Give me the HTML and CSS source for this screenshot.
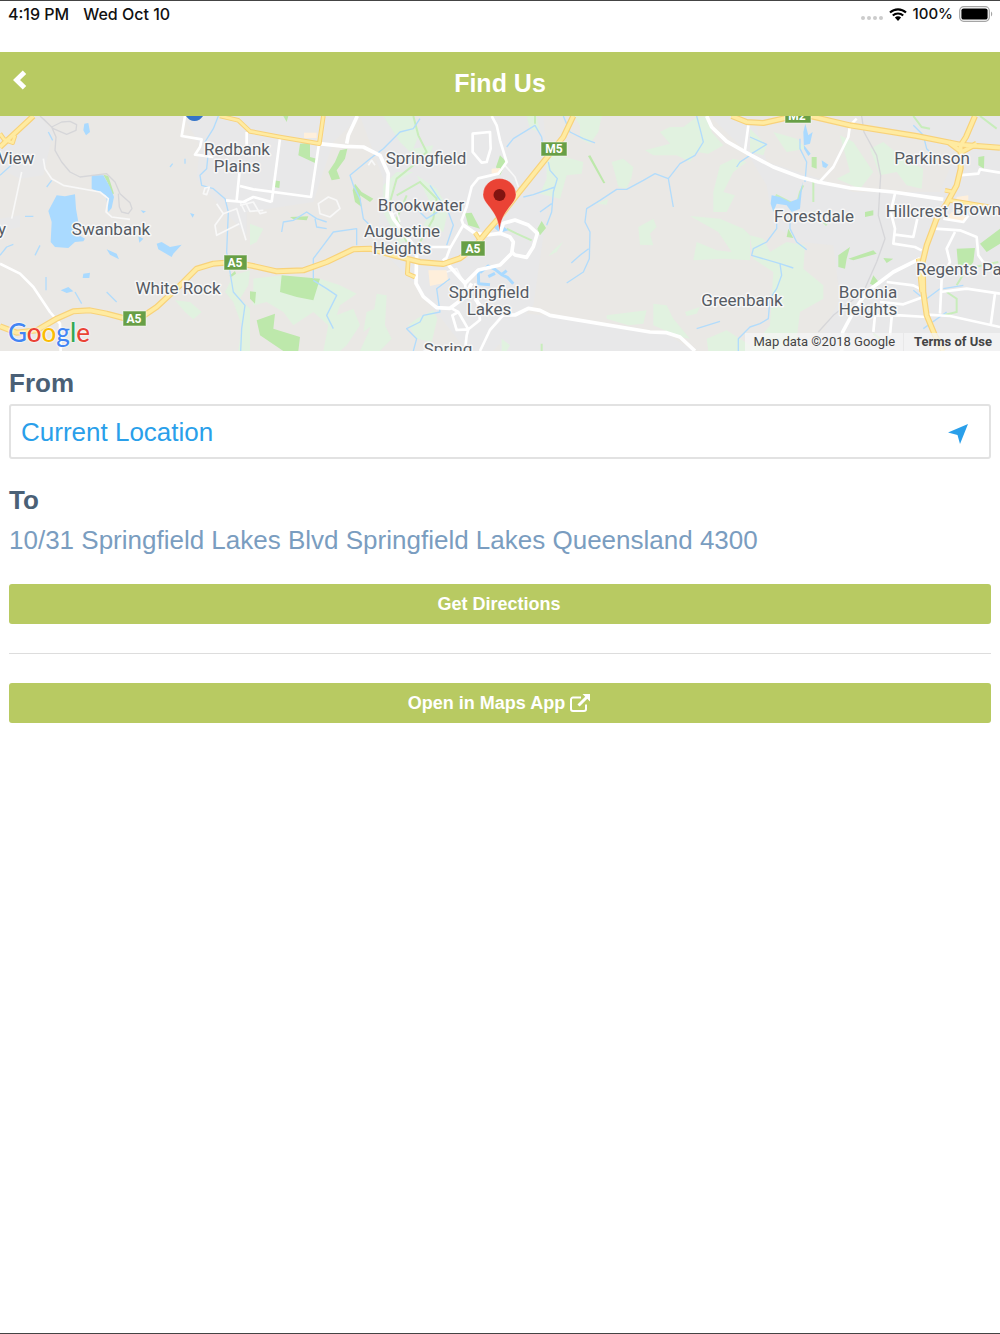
FILE: index.html
```html
<!DOCTYPE html>
<html lang="en">
<head>
    <meta charset="UTF-8">
    <meta name="viewport" content="width=device-width, initial-scale=1.0">
    <title>Find Us</title>
    <link rel="stylesheet" href="styles.css">
</head>
<body>
    <div class="status-bar">
        <div class="status-left">
            <span>4:19 PM</span>
            <span>Wed Oct 10</span>
        </div>
        <div class="status-right">
            <span class="signal"><i></i><i></i><i></i><i></i></span>
            <svg class="wifi" width="18" height="13" viewBox="0 0 18 13">
                <path d="M1 4.6a11.5 11.5 0 0 1 16 0M3.8 7.6a7.5 7.5 0 0 1 10.4 0" fill="none" stroke="#000" stroke-width="2.1"/>
                <path d="M5.9 9.6a4.4 4.4 0 0 1 6.2 0L9 12.9z"/>
            </svg>
            <span class="percent">100%</span>
            <svg width="34" height="16" viewBox="0 0 34 16">
                <rect x="0.7" y="0.7" width="29.6" height="14.6" rx="4" fill="none" stroke="#a5a5a5" stroke-width="1.2"/>
                <rect x="2.4" y="2.4" width="26.2" height="11.2" rx="2.2"/>
                <path d="M32 5.5c1.6.8 1.6 4.200 0 5z" fill="#a5a5a5"/>
            </svg>
        </div>
    </div>

    <header class="header">
        <button class="back" id="back" aria-label="Back">
            <svg width="14" height="20" viewBox="0 0 14 20">
                <path d="M11.500 2.300L3.500 10l8 7.700" fill="none" stroke="#fff" stroke-width="5"/>
            </svg>
        </button>
        <h1>Find Us</h1>
    </header>

    <div class="map" id="map">
        <svg class="map-canvas" viewBox="0 0 1000 235" preserveAspectRatio="xMidYMid slice">
            <g transform="translate(0 -4) scale(.33333)">
                <!-- built up areas -->
                <g class="urban">
                    <path d="M0 12H120L160 60 130 190 60 200 0 170zM0 320L60 310 60 345 0 360z"/>
                    <path d="M550 12H1080L1000 90 940 270 740 300 740 370 640 260 590 200 600 100z"/>
                    <path d="M1080 12H1500L1660 180 1620 440 1600 580 1480 717H1400L1240 510 1130 400 1150 200z"/>
                    <path d="M1500 12H1630L1640 120 1560 250 1500 200zM1640 610L2000 665 2080 717H1500V600z"/>
                    <path d="M2130 12H2260L2300 150 2460 200 2560 240 2820 240 2870 120 2680 60 2560 12H3000V717H2440L2520 560 2500 400 2400 390 2320 340 2300 220 2240 120z"/>
                </g>

                <!-- bushland and parks -->
                <g class="bush">
                    <path d="M700 490L750 475 745 520 720 560 750 590V717H715L725 640 700 570 675 540z"/>
                    <path d="M750 335L790 350 770 390 750 400zM525 565L570 570 605 600 580 622 555 600z"/>
                    <path d="M760 500L850 490 900 560 960 500 1020 520 1070 545 1020 580 1010 610 1060 590 1080 640 1040 700 1020 717H970L985 640 940 600 880 640 850 600 800 570 760 580z"/>
                    <path d="M1130 545L1160 550 1155 640 1175 680 1140 717H1080L1110 650 1120 610zM1100 600L1125 590 1130 630 1090 660z"/>
                    <path d="M1150 12L1235 12 1260 60 1240 110 1300 100 1290 130 1240 130 1200 90zM1250 190L1310 230 1345 290 1330 360 1270 340 1300 290z"/>
                    <path d="M1150 220L1190 180 1240 180 1180 210 1170 300 1220 380 1200 400 1150 300z"/>
                    <path d="M1225 640L1250 620 1300 595 1312 620 1295 690 1250 680z"/>
                    <path d="M1580 12H1610L1620 60 1590 50zM1720 12H1805L1795 60 1770 95 1740 80 1740 40z"/>
                    <path d="M1640 120L1750 150 1745 185 1700 190 1680 260 1620 245 1640 200zM1835 150L1870 140 1900 165 1895 195 1880 230 1855 225 1845 185z"/>
                    <path d="M1980 60L2010 45 2050 45 2090 15 2125 12 2135 60 2170 100 2125 125 2090 120 2070 150 2030 130 1960 130 1935 115 2010 95z"/>
                    <path d="M1915 345L1960 320 1970 345 1950 365 1960 400 1920 398zM1645 432L1660 415 1690 388 1670 420zM1790 275L1825 260 1820 278z"/>
                    <path d="M2070 312L2160 320 2230 350 2250 370V445L2170 440 2080 445 2090 390 2150 415 2195 420 2155 360z"/>
                    <path d="M2160 160L2200 140 2240 150 2200 180 2170 240 2205 250 2180 300 2140 300 2140 240zM2250 370L2290 380 2310 420 2360 390 2415 400 2410 470 2470 520 2470 560 2400 600 2390 680 2330 717H2250L2310 640 2320 480 2260 440z"/>
                    <path d="M2250 50L2300 100 2290 130 2250 120zM2320 60L2390 80 2420 110 2360 120zM2520 70L2560 90 2620 180 2580 230 2510 200 2550 180zM2610 110L2650 90 2710 140 2770 170 2765 230 2720 220 2690 180 2640 190z"/>
                    <path d="M1820 610L1940 595 1930 635 1885 640 1820 620zM1960 575L2000 580 2020 620 2070 680 2040 675 1960 640zM2055 600L2100 585 2090 605 2060 612z"/>
                    <path d="M2120 680L2180 655 2250 700V717H2125zM1505 680L1530 700 1520 717 1505 717z"/>
                </g>
                <g class="park">
                    <path d="M845 490L960 500 940 565 890 555 840 540zM770 625L825 605 820 650 900 675 895 717H850L810 690 780 670z"/>
                    <path d="M688 492L705 477 708 485 695 494zM750 538L768 540 765 575 750 560zM870 315L925 313 920 325 880 322z"/>
                    <path d="M900 95L930 92 930 135 950 140 945 153 895 130zM822 205L840 208 838 228 822 225zM850 12H865L860 30z"/>
                    <path d="M1042 110L1020 115 1005 150 985 180 995 205 1020 200 1010 175 1035 140zM1065 215L1085 240 1120 260 1110 270 1080 250 1085 285 1065 270 1058 235z"/>
                    <path d="M1395 304L1415 302 1440 350 1405 340zM1488 165L1500 130 1520 150 1500 190zM1612 350L1625 327 1638 348 1620 370z"/>
                    <path d="M1764 132L1771 130 1816 213 1810 214zM310 188L325 192 342 245 335 246 322 210z"/>
                    <path d="M2515 430L2550 405 2540 440 2535 470 2515 465zM2545 440L2620 415 2630 425 2560 445zM2650 438L2680 440 2660 453zM2610 515L2620 490 2640 515 2630 525z"/>
                    <path d="M2435 135H2450V170L2435 165zM2935 135L2953 132 2952 170 2935 160zM2870 410L2925 408 2920 450 2895 485 2875 470zM2940 395L3000 350V395L2960 420z"/>
                    <path d="M2595 300L2620 295 2620 310 2595 315zM2365 350L2380 378 2360 375z"/>
                </g>
                <g class="greenway">
                    <path d="M1170 270L1190 200 1240 160 1280 120 1255 70 1240 12M1190 250L1260 210 1310 260 1300 320 1260 390M1220 390L1190 320 1220 250"/>
                    <path d="M1520 350L1550 365 1595 385M1605 12V35M2320 270L2330 250 2390 280 2400 240 2410 220M2440 210L2440 270M2440 300L2480 340M2940 12L2990 50M2740 12L2765 45 2790 50M2840 540L2870 560 2870 600 2830 610M2620 665L2640 680M2995 450L2900 470 2870 520M1625 695V717"/>
                </g>

                <!-- town centres -->
                <path class="centre" d="M912 62H950V78H912zM1285 475L1340 475 1345 510 1290 522zM1475 170L1500 168V182L1475 185zM2870 255L2905 250V270L2870 275zM2855 300L2905 310 2895 328 2840 320z"/>

                <!-- lakes and creeks -->
                <g class="water">
                    <path d="M170 250L195 253 225 247 228 290 235 330 230 365 255 380 250 388 225 390 205 408 165 405 152 390 155 330 145 297z"/>
                    <path d="M275 190L310 190 330 225 342 255 335 288 325 300 318 250 275 230zM253 35L265 33 270 60 258 70 250 55z"/>
                    <path d="M470 395L485 390 510 405 545 398 520 425 515 435 475 412zM320 412L350 425 357 442 330 428zM250 485L270 482 268 498 248 498zM182 535L205 525 220 538 200 543z"/>
                    <path d="M570 303L583 307 578 317zM415 372L430 380 418 392zM422 295L438 298 430 304z"/>
                    <path d="M2416 35L2425 70 2438 60 2430 95 2412 100 2432 125 2425 132 2412 110 2410 60zM2315 250L2340 255 2370 270 2395 260 2408 210 2400 290 2375 300 2360 280 2330 275 2320 300 2312 275zM2465 145L2485 158 2478 168 2468 165z"/>
                    <path d="M1480 345L1500 335 1525 355 1500 362z"/>
                </g>
                <path class="inlet" d="M1435 480L1436 515 1470 518M1440 482L1465 462 1485 472 1505 488 1522 496 1540 515M1485 484L1465 494M1505 488L1520 476"/>
                <g class="creek">
                    <path d="M655 12L640 50 615 90 625 120 620 170 600 190 605 220 640 230 675 260 685 300 680 420 690 480 700 540 735 580 725 650 722 717"/>
                    <path d="M845 360L850 330 880 325 920 300 950 320 980 330M945 320L950 345 980 350M1115 345L1090 320 1080 260 1060 220 1050 190 1110 140 1150 110 1200 60 1240 50 1260 20M1070 400L1070 350 1000 360 970 400 940 440 940 500M940 505L980 530 1010 550 980 610 1000 650"/>
                    <path d="M1290 220L1310 250 1345 300 1360 340 1340 400M1350 500L1310 530 1320 600 1270 610 1260 630 1220 650 1250 680 1240 717M1330 290L1280 320 1250 290M1520 105L1540 80 1605 40 1625 75 1630 110M1690 12L1710 60 1750 80 1785 93"/>
                    <path d="M1645 150L1650 175 1672 200 1660 240 1655 300 1640 340M1570 255L1600 248 1665 225M1620 300L1655 275"/>
                    <path d="M2090 12L2100 50 2110 90 2085 130 2040 155 2005 200 1965 185 1930 205 1880 232 1850 232 1800 265 1760 290 1755 330 1770 360 1768 440 1750 480 1700 513M2005 200L2012 240 2020 285M1766 410L1740 430 1714 453"/>
                    <path d="M2250 75L2300 97 2255 125M2400 80V110L2420 150 2415 210M2330 290V350L2300 390 2260 410 2255 430 2340 455 2345 490 2330 530 2310 560 2305 620 2280 635 2250 645 2215 680 2215 717M2340 455L2380 468M2370 330V350L2390 390 2420 413"/>
                    <path d="M0 190L50 145M145 60L158 85M140 225L155 205M75 313H100M0 430L20 405 40 397M138 495V535M225 540L245 575M320 540L350 570M105 430L120 400M2740 40L2770 70 2780 110 2790 120M2740 535L2765 555M2820 530L2780 560M2890 520L2830 530M2770 650L2840 600M2090 650L2160 628M2210 165L2220 150 2250 130M510 165L518 155M555 140V155"/>
                </g>

                <!-- railway -->
                <g class="rail">
                    <path d="M120 12L155 45 168 75 165 115 185 150 210 180 240 195 320 185 345 210 360 245 390 272 396 290 385 305 365 300 358 285 355 245M130 20L160 50 200 67 228 55 230 38 210 28 185 30 155 45"/>
                    <path d="M2585 12L2592 60 2630 130 2642 190 2635 310 2655 380 2630 450 2590 540 2500 610 2455 660"/>
                </g>

                <!-- streets -->
                <g class="street minor">
                    <path d="M130 140L135 170 155 200 190 220 300 240 325 260 318 300 335 315 390 322M65 180L50 250 35 320M650 275L670 305 710 290 738 385M670 305L645 340 650 370 718 335M610 245L615 228 628 225 620 248zM720 280L760 270 780 305 800 300"/>
                    <path d="M720 270L735 300M735 268L750 298 790 295M955 275L985 255 1010 265 1020 290 990 315 960 305zM1105 160L1115 145 1125 160M1515 160L1545 195 1555 225M1175 310L1190 300 1200 330M1340 480L1370 470 1385 500"/>
                </g>
                <g class="street">
                    <path d="M0 455L60 485 100 525 150 600 180 635 182 717M555 12L545 72 605 82 600 105 585 128 640 135M740 60V110M720 165L710 265M678 265L730 270 760 255 815 270M720 222L760 232 933 255 957 95M840 80L815 270"/>
                    <path class="wide" d="M957 95L1035 103 1090 105 1140 130 1165 185 1160 270 1180 320 1240 400 1250 424 1248 514 1270 554 1310 587 1350 589 1390 559 1415 514M1072 12L1045 70 1040 95"/>
                    <path d="M1418 65L1470 60 1472 110 1460 150 1445 152 1418 120zM1475 12L1490 40 1500 85 1520 150 1495 185 1435 199 1415 224 1400 284 1385 324 1390 339 1350 409 1335 449M1285 405H1350"/>
                    <path class="wide" d="M1390 339L1425 364 1460 369 1500 364 1530 375 1540 390 1535 424 1500 459 1435 474 1395 514 1350 464 1330 439"/>
                    <path class="wide" d="M1500 364L1510 334 1545 324 1585 339 1612 364 1600 404 1580 436 1545 429 1535 420"/>
                    <path d="M1355 589L1375 600 1357 610 1370 654 1405 652 1440 624 1425 514M1375 600L1405 652 1400 670 1395 717M1395 514L1400 560M1440 717L1470 654 1510 609"/>
                    <path class="wide" d="M1425 560L1440 580 1510 609 1545 609 1585 589 1620 595 1650 610 1950 660 2000 662 2040 675 2085 717"/>
                    <path class="wide" d="M2120 12L2135 45 2180 88 2250 128 2320 165 2400 195 2455 210 2550 228 2680 240 2830 262"/>
                    <path d="M2570 20L2550 40 2545 75 2500 165 2460 208M2245 40L2235 115M2685 245L2672 300 2685 350 2680 395 2745 405 2765 415M2685 368L2740 375 2752 320M2875 190L2935 185 2940 172 3000 182M2805 350L2880 355 2930 375 2935 430 2960 465M2865 360L2840 410 2850 450 2825 500 2820 605"/>
                    <path class="wide" d="M2760 440L2680 480 2600 540 2560 600 2528 660 2525 717"/>
                    <path d="M2660 510L2740 520 2770 535M2640 570L2710 577 2770 555M2780 608L2850 612 3000 645M2820 540L2900 530 3000 545M2620 660L2625 610 2700 610 2780 615M2675 615L2670 670M2985 545L2972 640M2830 320L2890 330 2905 310"/>
                </g>

                <!-- motorways: casing first, then fill -->
                <g class="motorway casing">
                    <path d="M660 12L715 25 750 58 840 75 958 95 970 12M0 65L12 82 38 92 45 70"/>
                    <path d="M1225 440L1222 485 1245 495M2860 240L2835 235M2755 440L2765 540M1425 362L1445 392M2850 265L3000 290"/>
                    <path class="main" d="M0 105L100 12M0 643L50 662 110 655 170 620 220 598 270 595 320 605 370 618 430 612 470 585 540 520 590 470 640 455 700 450 750 460 830 478 910 475 980 450 1060 412 1110 410 1180 430 1260 450 1330 456 1380 439 1420 409 1465 354 1500 314 1550 250 1650 125 1690 75 1720 12"/>
                    <path class="main" d="M2195 12L2240 30 2290 33 2370 15 2430 12 2550 40 2750 72 2880 98 3000 107M2925 12L2898 75 2882 100 2882 170 2870 220 2840 275 2810 320 2780 400 2768 450 2770 540 2780 610 2805 670 2830 717M2845 90L2885 120 2930 95"/>
                </g>
                <g class="motorway">
                    <path d="M660 12L715 25 750 58 840 75 958 95 970 12M0 65L12 82 38 92 45 70"/>
                    <path d="M1225 440L1222 485 1245 495M2860 240L2835 235M2755 440L2765 540M1425 362L1445 392M2850 265L3000 290"/>
                    <path class="main" d="M0 105L100 12M0 643L50 662 110 655 170 620 220 598 270 595 320 605 370 618 430 612 470 585 540 520 590 470 640 455 700 450 750 460 830 478 910 475 980 450 1060 412 1110 410 1180 430 1260 450 1330 456 1380 439 1420 409 1465 354 1500 314 1550 250 1650 125 1690 75 1720 12"/>
                    <path class="main" d="M2195 12L2240 30 2290 33 2370 15 2430 12 2550 40 2750 72 2880 98 3000 107M2925 12L2898 75 2882 100 2882 170 2870 220 2840 275 2810 320 2780 400 2768 450 2770 540 2780 610 2805 670 2830 717M2845 90L2885 120 2930 95"/>
                </g>
            </g>

            <path d="M186 0h17c-2 3-5 5-8.500 5s-6.500-2-8.500-5z" fill="#3474c8"/>

            <g class="shield">
                <rect x="224" y="139" width="23" height="15"/><text x="235" y="151">A5</text>
                <rect x="123" y="195" width="23" height="15"/><text x="134" y="207">A5</text>
                <rect x="461" y="125" width="24" height="15"/><text x="473" y="137">A5</text>
                <rect x="541" y="26" width="26" height="14"/><text x="554" y="37">M5</text>
                <rect x="785" y="-8" width="26" height="15"/><text x="797" y="4">M2</text>
            </g>

            <g class="place">
                <text x="16" y="48">View</text>
                <text x="2" y="119">y</text>
                <text x="237" y="39">Redbank</text>
                <text x="237" y="56">Plains</text>
                <text x="426" y="48">Springfield</text>
                <text x="421" y="95">Brookwater</text>
                <text x="402" y="121">Augustine</text>
                <text x="402" y="138">Heights</text>
                <text x="111" y="119">Swanbank</text>
                <text x="178" y="178">White Rock</text>
                <text x="489" y="182">Springfield</text>
                <text x="489" y="199">Lakes</text>
                <text x="448" y="239">Spring</text>
                <text x="742" y="190">Greenbank</text>
                <text x="868" y="182">Boronia</text>
                <text x="868" y="199">Heights</text>
                <text x="932" y="48">Parkinson</text>
                <text x="814" y="106">Forestdale</text>
                <text x="917" y="101">Hillcrest</text>
                <text class="from-left" x="953" y="99">Brown</text>
                <text class="from-left" x="916" y="159">Regents Park</text>
            </g>

            <path d="M499.500 116c-1-13-5-18-10-25-4-5-6.500-8-6.500-12.500a16.500 16 0 0 1 33 0c0 4.500-2.500 7.500-6.500 12.500-5 7-9 12-10 25z" fill="#ea4335" stroke="#fff" stroke-opacity=".5" stroke-width=".6"/>
            <circle cx="499.500" cy="79" r="6" fill="#811411"/>
        </svg>
        <a class="google" href="#map"><span class="blue">G</span><span class="red">o</span><span class="yellow">o</span><span class="blue">g</span><span class="green">l</span><span class="red">e</span></a>
        <div class="map-credits">
            <span>Map data ©2018 Google</span>
            <a href="#terms">Terms of Use</a>
        </div>
    </div>

    <main class="content">
        <form id="directions">
            <label class="title" for="from">From</label>
            <div class="from-box">
                <input type="text" id="from" value="Current Location">
                <button type="button" class="locate" id="locate" aria-label="Use current location">
                    <svg width="20" height="20" viewBox="0 0 20 20">
                        <path d="M20 0L12 20 9.500 11 0 8.500z" fill="#2a9fea"/>
                    </svg>
                </button>
            </div>

            <h2 class="title">To</h2>
            <p class="address">10/31 Springfield Lakes Blvd Springfield Lakes Queensland 4300</p>

            <button type="submit" class="btn">Get Directions</button>
        </form>
        <hr>
        <button class="btn" id="open-maps">
            Open in Maps App
            <svg width="20" height="18" viewBox="0 0 20 18">
                <path d="M11 3.500H3a2 2 0 0 0-2 2V15a2 2 0 0 0 2 2h11a2 2 0 0 0 2-2v-4.500" fill="none" stroke="#fff" stroke-width="2"/>
                <path d="M8.500 11.500L17 3" stroke="#fff" stroke-width="3"/>
                <path d="M12.500 0H20v7.500z" fill="#fff"/>
            </svg>
        </button>
    </main>

    <script>
        const fromInput = document.getElementById('from');

        document.getElementById('back').addEventListener('click', () => {
            history.back();
        });

        document.getElementById('locate').addEventListener('click', () => {
            fromInput.value = 'Current Location';
        });

        document.getElementById('directions').addEventListener('submit', (e) => {
            e.preventDefault();
        });
    </script>
</body>
</html>
```

FILE: styles.css
```css
* {
    box-sizing: border-box;
}
body {
    margin: 0;
    min-height: 100vh;
    display: flex;
    flex-direction: column;
    font-family: "Liberation Sans", Arial, sans-serif;
    background: #fff;
    border-top: 1px solid #444;
    border-bottom: 1px solid #444;
}
button {
    border: none;
    font-family: inherit;
    cursor: pointer;
}

.status-bar {
    display: flex;
    justify-content: space-between;
    align-items: flex-start;
    height: 51px;
    padding: 3px 7px 0 8px;
    font-family: Inter, sans-serif;
    font-size: 16px;
    line-height: 20px;
    font-weight: 500;
    color: #111;
}
.status-left {
    display: flex;
    gap: 14px;
}
.status-right {
    display: flex;
    align-items: center;
    gap: 6px;
}
.percent {
    font-size: 15px;
}
.signal {
    display: flex;
    gap: 2px;
    padding-top: 8px;
}
.signal i {
    width: 4px;
    height: 4px;
    border-radius: 50%;
    background: #ccc;
}

.header {
    position: relative;
    display: flex;
    justify-content: center;
    align-items: center;
    height: 64px;
    padding-bottom: 2px;
    background: #b8ca62;
    color: #fff;
}
.header h1 {
    margin: 0;
    font-size: 25px;
    line-height: 30px;
}
.back {
    position: absolute;
    left: 0;
    top: 0;
    height: 56px;
    padding: 0 13px;
    background: none;
}
.back svg {
    display: block;
}

.map {
    position: relative;
    height: 235px;
    background: #eae8e5;
    overflow: hidden;
}
.map-canvas {
    display: block;
    width: 100%;
    height: 100%;
}
.urban {
    fill: #e8e8e9;
}
.bush {
    fill: #e1f2e0;
}
.park {
    fill: #bde8ab;
}
.greenway {
    fill: none;
    stroke: #c8edbb;
    stroke-width: 6;
}
.centre {
    fill: #feefdb;
}
.water {
    fill: #aadaff;
}
.inlet {
    fill: none;
    stroke: #aadaff;
    stroke-width: 9;
    stroke-linejoin: round;
}
.creek {
    fill: none;
    stroke: #b2dcfc;
    stroke-width: 4;
    stroke-linejoin: round;
}
.rail {
    fill: none;
    stroke: #d6d6d9;
    stroke-width: 4;
    stroke-linejoin: round;
}
.street {
    fill: none;
    stroke: #fff;
    stroke-width: 8;
    stroke-linejoin: round;
}
.street .wide {
    stroke-width: 11;
}
.minor {
    stroke: #f8f8f8;
    stroke-width: 5;
}
.motorway {
    fill: none;
    stroke: #ffeba1;
    stroke-width: 8;
    stroke-linejoin: round;
}
.motorway .main {
    stroke-width: 11;
}
.casing {
    stroke: #f8d27a;
    stroke-width: 14;
}
.casing .main {
    stroke-width: 18;
}
.shield rect {
    fill: #689f46;
    stroke: #fff;
    stroke-opacity: 0.5;
}
.shield text {
    font-family: Roboto, sans-serif;
    font-size: 12px;
    font-weight: 700;
    fill: #fff;
    text-anchor: middle;
}
.place text {
    font-family: Roboto, sans-serif;
    font-size: 17px;
    fill: #565b63;
    text-anchor: middle;
    paint-order: stroke;
    stroke: #f7f7f7;
    stroke-width: 3px;
    stroke-linejoin: round;
}
.place .from-left {
    text-anchor: start;
}
.google {
    position: absolute;
    left: 8px;
    bottom: 3px;
    font-family: Lato, sans-serif;
    font-size: 26px;
    line-height: 32px;
    font-weight: 500;
    text-decoration: none;
    text-shadow: 0 0 2px #fff, 0 0 2px #fff;
}
.blue {
    color: #4285f4;
}
.red {
    color: #ea4335;
}
.yellow {
    color: #fbbc05;
}
.green {
    color: #34a853;
}
.map-credits {
    position: absolute;
    right: 0;
    bottom: 0;
    display: flex;
    font-family: Roboto, sans-serif;
    font-size: 13px;
    line-height: 18px;
    color: #444;
}
.map-credits span,
.map-credits a {
    padding: 0 8px;
    background: rgba(245, 245, 245, 0.75);
}
.map-credits a {
    margin-left: 1px;
    padding-left: 10px;
    font-weight: 700;
    color: #444;
    text-decoration: none;
}

.content {
    padding: 16px 9px;
}
.title {
    display: block;
    margin: 0;
    font-size: 26px;
    line-height: 32px;
    font-weight: 700;
    color: #4a6076;
}
.from-box {
    display: flex;
    align-items: center;
    height: 55px;
    margin: 5px 0 25px;
    padding-right: 21px;
    border: 2px solid #e2e2e2;
    border-radius: 3px;
}
.from-box input {
    flex: 1;
    min-width: 0;
    padding: 0 10px;
    border: none;
    outline: none;
    background: none;
    font-family: inherit;
    font-size: 26px;
    line-height: 32px;
    color: #2a9fea;
}
.locate {
    padding: 4px 0 0;
    background: none;
}
.locate svg {
    display: block;
}
.address {
    margin: 8px 0 28px;
    font-size: 26px;
    line-height: 32px;
    color: #7a9dc0;
}
.btn {
    display: flex;
    justify-content: center;
    align-items: center;
    gap: 5px;
    width: 100%;
    height: 40px;
    padding: 0 2px 0 0;
    border-radius: 3px;
    background: #b8ca62;
    color: #fff;
    font-size: 18px;
    font-weight: 700;
}
.btn:active {
    background: #a6b853;
}
hr {
    margin: 29px 0;
    border: none;
    border-top: 1px solid #ddd;
}
```
